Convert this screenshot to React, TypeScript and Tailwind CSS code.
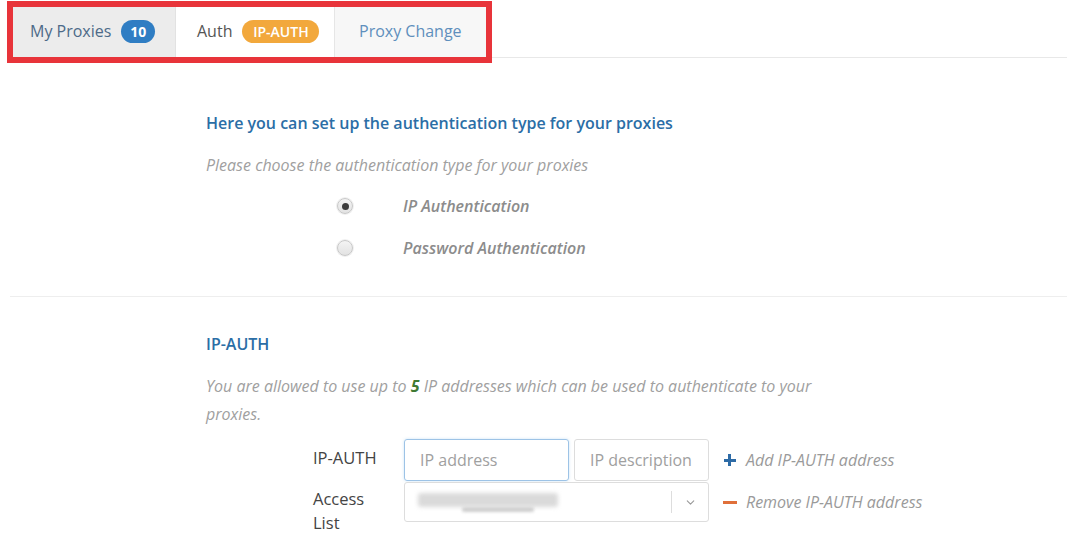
import { ChevronDown } from "lucide-react";

const font = { fontFamily: '"Open Sans", "Noto Sans", Arial, sans-serif' };

function Radio({ checked }: { checked?: boolean }) {
  return (
    <span className="flex h-[16px] w-[16px] items-center justify-center rounded-full border border-[#c8c8c8] bg-gradient-to-b from-[#f4f4f4] to-[#e2e2e2] shadow-[0_0_0_1px_#f0f0f0]">
      {checked && <span className="h-[7px] w-[7px] rounded-full bg-[#3c3c3c]" />}
    </span>
  );
}

function Tabs() {
  return (
    <div className="flex items-start">
      <div className="ml-[7px] mt-[1px] flex border-[6px] border-[#e8343a]">
        <div className="flex h-[50px] w-[163px] items-center gap-[10px] border-r border-[#e2e2e2] bg-[#ececec] pb-[2px] pl-[17px] text-[16px] text-[#4d6a88]">
          My Proxies
          <span className="flex h-[23px] w-[34px] items-center justify-center rounded-full bg-[#2f7dc3] text-[14px] font-bold text-white">
            10
          </span>
        </div>
        <div className="flex h-[50px] w-[159px] items-center gap-[10px] border-r border-[#e6e6e6] bg-white pb-[2px] pl-[21px] text-[16px] text-[#555]">
          Auth
          <span className="flex h-[23px] w-[77px] items-center justify-center rounded-full bg-[#f2a83c] text-[14px] font-semibold text-white">
            IP-AUTH
          </span>
        </div>
        <div className="flex h-[50px] w-[151px] items-center bg-[#f7f7f7] pb-[2px] pl-[24px] text-[16px] text-[#5f8fbd]">
          Proxy Change
        </div>
      </div>
      <div className="mt-[57px] h-px w-[575px] bg-[#e8e8e8]" />
    </div>
  );
}

function ActionLink({ kind, children }: { kind: "add" | "remove"; children: React.ReactNode }) {
  return (
    <div className="ml-[13px] flex h-full items-center gap-[9px] text-[16px] italic text-[#9a9a9a]">
      <span className="relative flex h-[15px] w-[15px] items-center justify-center">
        {kind === "add" ? (
          <>
            <span className="absolute h-[3px] w-[12px] bg-[#2d6ba6]" />
            <span className="absolute h-[12px] w-[3px] bg-[#2d6ba6]" />
          </>
        ) : (
          <span className="h-[3px] w-[14px] bg-[#e0703a]" />
        )}
      </span>
      {children}
    </div>
  );
}

export default function App() {
  return (
    <div className="h-[540px] w-[1077px] overflow-hidden bg-white" style={font}>
      <Tabs />

      <div className="pl-[206px]">
        <h3 className="mt-[48px] text-[16px] font-semibold leading-[24px] text-[#2b6ea6]">
          Here you can set up the authentication type for your proxies
        </h3>
        <p className="mt-[18px] text-[16px] italic leading-[24px] text-[#a0a0a0]">
          Please choose the authentication type for your proxies
        </p>
        <div className="mt-[17px] flex flex-col gap-[18px]">
          <label className="flex h-[24px] items-center">
            <span className="ml-[131px]">
              <Radio checked />
            </span>
            <span className="ml-[50px] text-[16px] font-semibold italic text-[#8c8c8c]">
              IP Authentication
            </span>
          </label>
          <label className="flex h-[24px] items-center">
            <span className="ml-[131px]">
              <Radio />
            </span>
            <span className="ml-[50px] text-[16px] font-semibold italic text-[#8c8c8c]">
              Password Authentication
            </span>
          </label>
        </div>
      </div>

      <div className="ml-[10px] mt-[36px] h-px w-[1057px] bg-[#eeeeee]" />

      <div className="pl-[206px]">
        <h3 className="mt-[35px] text-[16px] font-semibold leading-[24px] text-[#2b6ea6]">IP-AUTH</h3>
        <p className="mt-[16px] w-[625px] text-[16px] italic leading-[28px] text-[#a0a0a0]">
          You are allowed to use up to <b className="font-bold text-[#3f7a33]">5</b> IP addresses which can
          be used to authenticate to your proxies.
        </p>

        <div className="mt-[11px] flex h-[42px] items-start">
          <div className="w-[198px] pl-[107px] pt-[7px] text-[16.5px] leading-[24px] text-[#444]">IP-AUTH</div>
          <div className="flex gap-[5px]">
            <div className="flex h-[42px] w-[165px] items-center rounded-[3px] border border-[#9dc3e6] pl-[15px] text-[16px] text-[#a0a0a0] shadow-[0_0_3px_rgba(102,175,233,0.35)]">
              IP address
            </div>
            <div className="flex h-[42px] w-[135px] items-center rounded-[3px] border border-[#dddddd] pl-[15px] text-[16px] text-[#a0a0a0]">
              IP description
            </div>
          </div>
          <ActionLink kind="add">Add IP-AUTH address</ActionLink>
        </div>

        <div className="mt-[1px] flex items-start">
          <div className="w-[198px] pl-[107px] pt-[5px] text-[16.5px] leading-[24px] text-[#444]">
            Access
            <br />
            List
          </div>
          <div className="flex h-[40px] w-[305px] items-center rounded-[3px] border border-[#dddddd] bg-white">
            <div className="ml-[13px] flex flex-col">
              <span className="h-[14px] w-[140px] rounded-[3px] bg-[#dadada] blur-[2px]" />
              <span className="ml-[44px] h-[5px] w-[72px] rounded-[2px] bg-[#cfcfcf] blur-[1.5px]" />
            </div>
            <div className="ml-auto h-[22px] w-px bg-[#dddddd]" />
            <div className="flex w-[36px] items-center justify-center text-[#999]">
              <ChevronDown size={13} strokeWidth={2} />
            </div>
          </div>
          <div className="h-[40px]">
            <ActionLink kind="remove">Remove IP-AUTH address</ActionLink>
          </div>
        </div>
      </div>
    </div>
  );
}
